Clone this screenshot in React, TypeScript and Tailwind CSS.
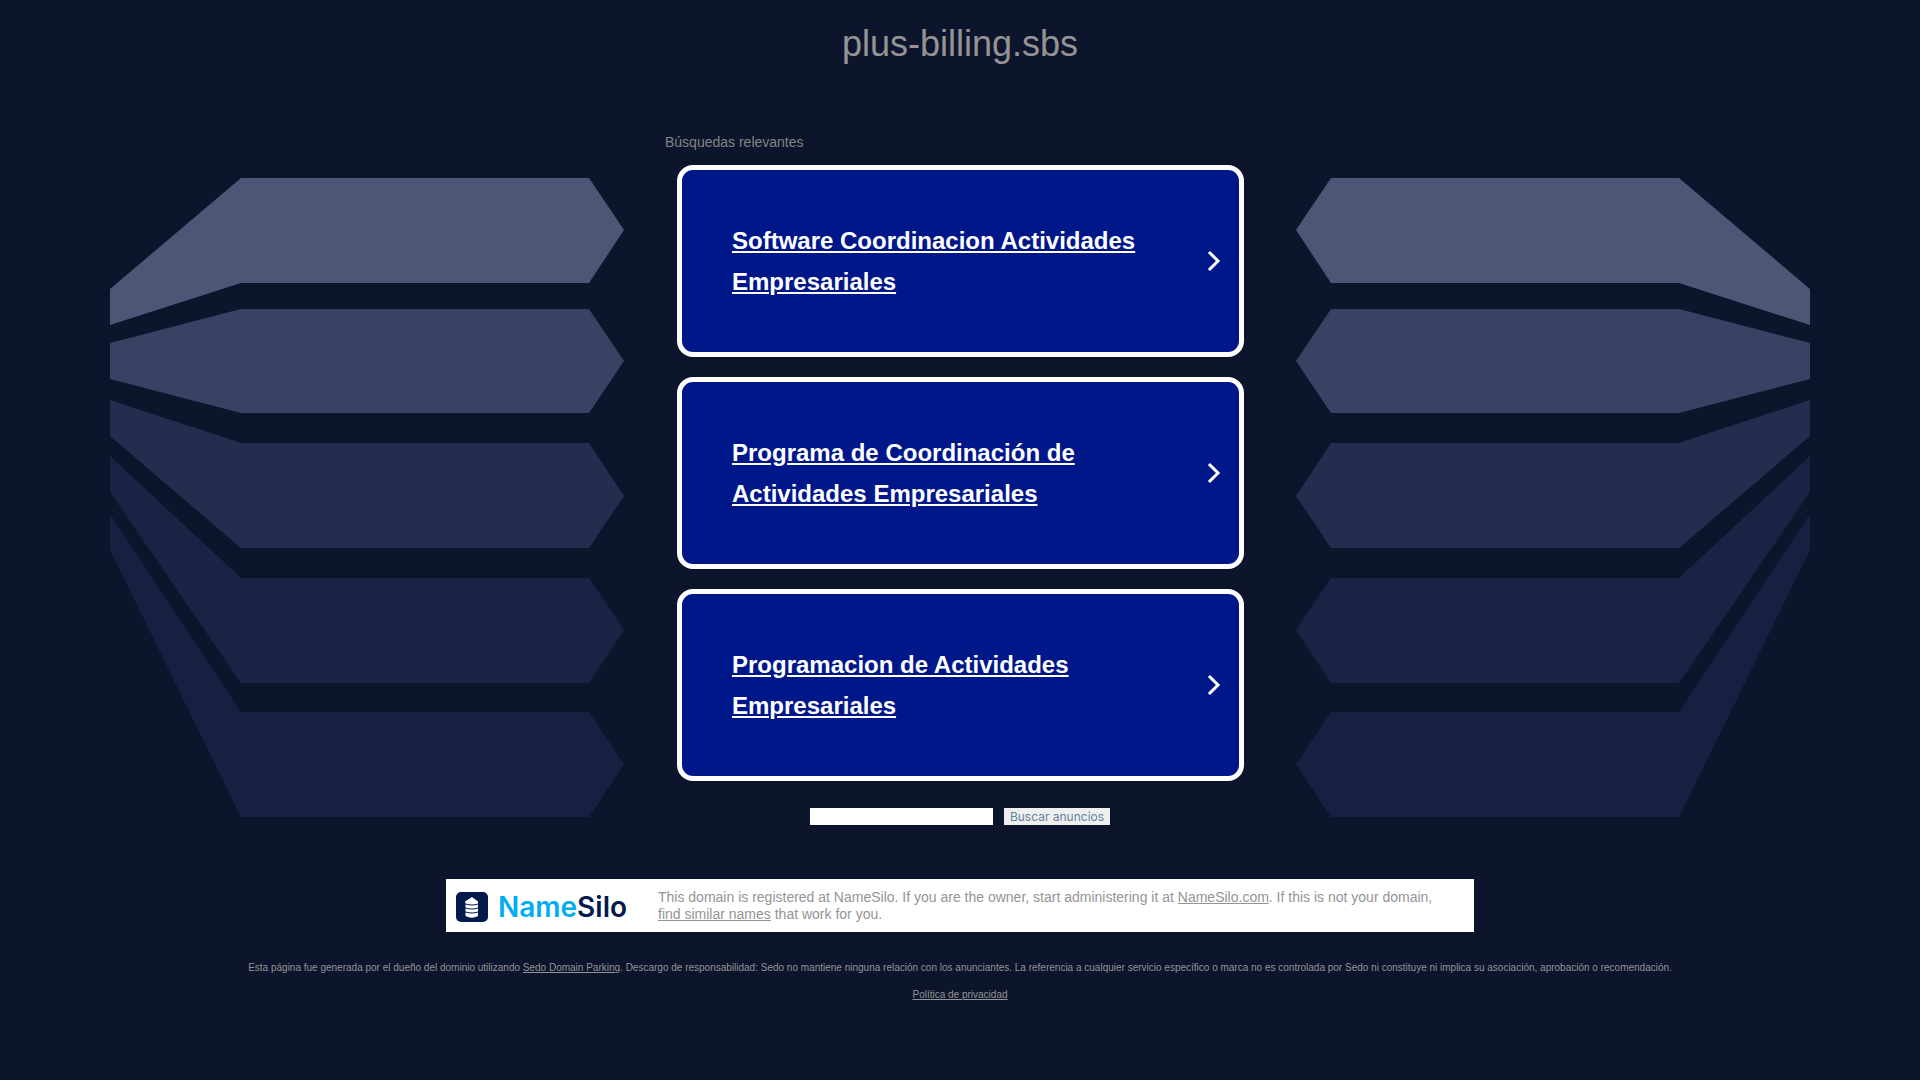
const relatedSearches = [
  'Software Coordinacion Actividades Empresariales',
  'Programa de Coordinación de Actividades Empresariales',
  'Programacion de Actividades Empresariales',
];

// points are relative to the top left corner of the left fan
const fanShapes = [
  { fill: '#4c5776', points: '0,111 131,0 479,0 514,52 479,105 131,105 0,147' },
  { fill: '#384263', points: '0,165 131,131 479,131 514,183 479,235 131,235 0,201' },
  { fill: '#232e4e', points: '0,222 131,265 479,265 514,318 479,370 131,370 0,258' },
  { fill: '#192445', points: '0,278 131,400 479,400 514,452 479,505 131,505 0,314' },
  { fill: '#162141', points: '0,336 131,534 479,534 514,586 479,639 131,639 0,372' },
];

function Fan({ className = '' }: { className?: string }) {
  return (
    <svg
      className={`mt-[66px] h-[639px] w-[514px] shrink ${className}`}
      viewBox="0 0 514 639"
      aria-hidden="true"
    >
      {fanShapes.map((shape) => (
        <polygon key={shape.fill} points={shape.points} fill={shape.fill} />
      ))}
    </svg>
  );
}

function NameSiloLogo() {
  return (
    <div className="flex w-[202px] shrink-0 items-center gap-[10px] pt-[2px] pl-[10px]">
      <svg className="h-8 w-8 shrink-0" viewBox="0 0 32 32" aria-hidden="true">
        <rect x="0" y="1" width="32" height="30" rx="5" fill="#031a4e" />
        <path d="M9 10.500 L16 6 L22 10.500 V12.500 Q16 14.500 9.500 12.500 Z" fill="#fff" />
        <path d="M9.500 13.500 Q16 15.500 22 13.500 V16.500 Q16 18.500 9.500 16.500 Z" fill="#fff" />
        <path d="M9.500 17.500 Q16 19.500 22 17.500 V20.500 Q16 22.500 9.500 20.500 Z" fill="#fff" />
        <path d="M9.500 21.500 Q16 23.500 22 21.500 V25 Q16 28.500 9.500 25 Z" fill="#fff" />
      </svg>
      <span className="font-[Inter,sans-serif] text-[28px] leading-8 font-semibold text-[#031a4e]">
        <span className="text-[#00adef]">Name</span>Silo
      </span>
    </div>
  );
}

function SearchCard({ title }: { title: string }) {
  return (
    <li className="flex min-h-48 items-center rounded-2xl border-5 border-white bg-[#00178a] pr-[17px] pl-[50px]">
      <a href="#" className="flex flex-1 items-center justify-between">
        <span className="max-w-[420px] text-2xl leading-[41px] font-bold text-white underline">
          {title}
        </span>
        <svg className="h-6 w-4 shrink-0" viewBox="0 0 16 24" fill="none" aria-hidden="true">
          <path d="M4 4 L12 12 L4 20" stroke="#fff" strokeWidth="3" strokeLinecap="square" />
        </svg>
      </a>
    </li>
  );
}

export default function App() {
  return (
    <div className="flex min-h-screen flex-col items-center bg-[#0d152d] font-['Liberation_Sans',Arial,sans-serif] text-[#949494]">
      <header className="pt-[17px] pb-[41px]">
        <h1 className="text-4xl leading-[54px]">plus-billing.sbs</h1>
      </header>

      <main className="flex w-full flex-col items-center">
        <div className="flex w-full justify-center">
          <Fan />
          <section className="mx-[41px] w-[590px] shrink-0 pt-[18px]">
            <h2 className="text-sm leading-6 text-[#848484]">Búsquedas relevantes</h2>
            <ul className="mt-[11px] mr-[11px] ml-3 flex flex-col gap-5">
              {relatedSearches.map((title) => (
                <SearchCard key={title} title={title} />
              ))}
            </ul>
            <form
              className="mt-[27px] flex justify-center gap-[11px]"
              onSubmit={(e) => e.preventDefault()}
            >
              <input
                type="text"
                aria-label="Buscar anuncios"
                className="h-[17px] w-[183px] bg-white px-1 text-xs text-black"
              />
              <button
                type="submit"
                className="h-[17px] bg-[#efefef] px-[6px] font-[Inter,sans-serif] text-xs leading-4 text-[#64829b]"
              >
                Buscar anuncios
              </button>
            </form>
          </section>
          <Fan className="-scale-x-100" />
        </div>

        <div className="mt-[54px] flex w-[1028px] max-w-full items-center bg-white pt-[10px] pb-[9px]">
          <NameSiloLogo />
          <p className="flex-1 pr-4 pl-[10px] text-sm leading-[17px]">
            This domain is registered at NameSilo. If you are the owner, start administering it at{' '}
            <a href="#" className="underline">NameSilo.com</a>. If this is not your domain,{' '}
            <a href="#" className="underline">find similar names</a> that work for you.
          </p>
        </div>
      </main>

      <footer className="mt-7 flex flex-col items-center gap-3 px-4 text-center text-[10px] leading-[15px]">
        <p>
          Esta página fue generada por el dueño del dominio utilizando{' '}
          <a href="#" className="underline">Sedo Domain Parking</a>. Descargo de responsabilidad: Sedo no
          mantiene ninguna relación con los anunciantes. La referencia a cualquier servicio específico o
          marca no es controlada por Sedo ni constituye ni implica su asociación, aprobación o
          recomendación.
        </p>
        <a href="#" className="underline">Política de privacidad</a>
      </footer>
    </div>
  );
}
